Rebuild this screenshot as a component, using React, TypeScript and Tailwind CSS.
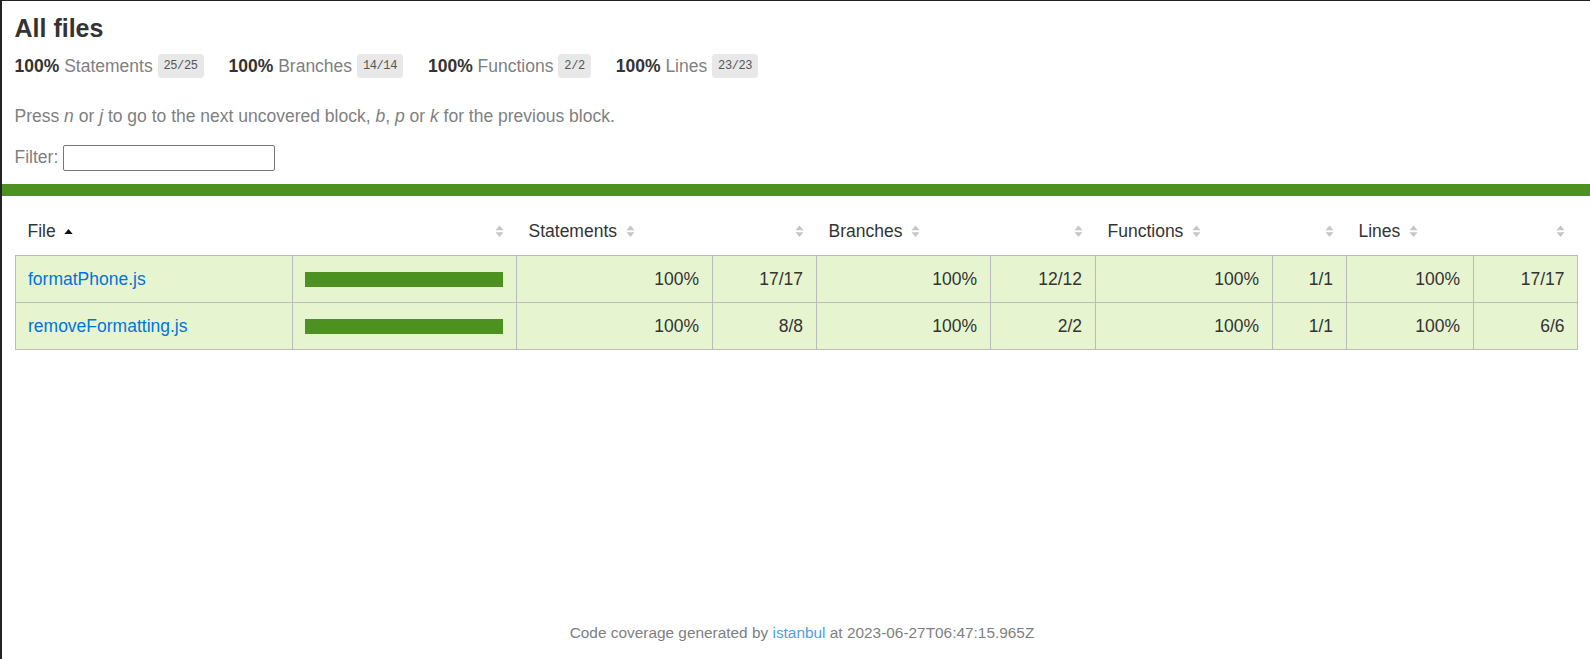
import React from "react";

const SortBoth = () => (
  <svg
    width="9"
    height="12.5"
    viewBox="0 0 7 10"
    className="inline-block ml-[8.75px] align-baseline"
  >
    <path d="M0.3 4.2 L3.5 0.4 L6.7 4.2 Z" fill="#c6c6c6" />
    <path d="M0.3 5.8 L3.5 9.6 L6.7 5.8 Z" fill="#c6c6c6" />
  </svg>
);

const SortAsc = () => (
  <svg
    width="9"
    height="12.5"
    viewBox="0 0 7 10"
    className="inline-block ml-[8.75px] align-baseline"
  >
    <path d="M0.2 7.2 L3.5 3.2 L6.8 7.2 Z" fill="#111" />
  </svg>
);

const stats = [
  { label: "Statements", frac: "25/25" },
  { label: "Branches", frac: "14/14" },
  { label: "Functions", frac: "2/2" },
  { label: "Lines", frac: "23/23" },
];

const rows = [
  {
    file: "formatPhone.js",
    s: "17/17",
    b: "12/12",
    f: "1/1",
    l: "17/17",
  },
  {
    file: "removeFormatting.js",
    s: "8/8",
    b: "2/2",
    f: "1/1",
    l: "6/6",
  },
];

const td =
  "border border-[#bbb] px-[12.5px] py-[12.5px] leading-[21px] text-right whitespace-nowrap";

export default function App() {
  return (
    <div
      className="min-h-screen flex flex-col border-t border-l-2 border-[#222] bg-white text-[#333] text-[17.5px]"
      style={{ fontFamily: '"Liberation Sans", Arial, Helvetica, sans-serif' }}
    >
      <div className="flex-1">
        <div className="px-[12.5px] pt-[13px] pb-[11px]">
          <h1 className="text-[25px] font-bold leading-[28px] m-0">All files</h1>
          <div className="flex pt-[12px] pb-[12px]">
            {stats.map((s) => (
              <div key={s.label} className="pr-[25px] h-[24px] flex items-center whitespace-pre">
                <span className="font-bold">100%</span>
                <span className="text-[#7f7f7f]">{" " + s.label + " "}</span>
                <span
                  className="inline-block bg-[#e8e8e8] text-[#555] text-[12px] leading-[14px] px-[6px] py-[5px] rounded-[3.75px] tracking-[-0.4px]"
                  style={{ fontFamily: '"Liberation Mono", Consolas, monospace' }}
                >
                  {s.frac}
                </span>
              </div>
            ))}
          </div>
          <p className="text-[#7f7f7f] leading-[20px] mt-[16px] mb-[16px]">
            Press <em>n</em> or <em>j</em> to go to the next uncovered block,{" "}
            <em>b</em>, <em>p</em> or <em>k</em> for the previous block.
          </p>
          <div className="h-[31px] flex items-center text-[#7f7f7f] whitespace-pre">
            <span>Filter: </span>
            <input
              type="search"
              className="w-[212px] h-[26px] border border-[#767676] rounded-[2px] bg-white outline-none"
            />
          </div>
        </div>
        <div className="h-[12px] bg-[#4d9221]" />
        <div className="pt-[12px] pl-[12.5px] pr-[12px]">
          <table className="w-full table-fixed border-collapse">
            <colgroup>
              <col className="w-[277px]" />
              <col className="w-[224px]" />
              <col className="w-[196px]" />
              <col className="w-[104px]" />
              <col className="w-[174px]" />
              <col className="w-[105px]" />
              <col className="w-[177px]" />
              <col className="w-[74px]" />
              <col className="w-[127px]" />
              <col />
            </colgroup>
            <thead>
              <tr className="h-[47.5px]">
                <th className="px-[12.5px] text-left font-normal whitespace-nowrap">
                  File
                  <SortAsc />
                </th>
                <th className="px-[12.5px] text-right font-normal">
                  <SortBoth />
                </th>
                <th className="px-[12.5px] text-left font-normal whitespace-nowrap">
                  Statements
                  <SortBoth />
                </th>
                <th className="px-[12.5px] text-right font-normal">
                  <SortBoth />
                </th>
                <th className="px-[12.5px] text-left font-normal whitespace-nowrap">
                  Branches
                  <SortBoth />
                </th>
                <th className="px-[12.5px] text-right font-normal">
                  <SortBoth />
                </th>
                <th className="px-[12.5px] text-left font-normal whitespace-nowrap">
                  Functions
                  <SortBoth />
                </th>
                <th className="px-[12.5px] text-right font-normal">
                  <SortBoth />
                </th>
                <th className="px-[12.5px] text-left font-normal whitespace-nowrap">
                  Lines
                  <SortBoth />
                </th>
                <th className="px-[12.5px] text-right font-normal">
                  <SortBoth />
                </th>
              </tr>
            </thead>
            <tbody>
              {rows.map((r) => (
                <tr key={r.file} className="bg-[#e6f5d0]">
                  <td className="border border-[#bbb] px-[12.5px] py-[12.5px] leading-[21px] text-left whitespace-nowrap">
                    <a href="#" className="text-[#0074d9]">
                      {r.file}
                    </a>
                  </td>
                  <td className="border border-[#bbb] px-[12.5px] py-[12.5px]">
                    <div className="h-[15px] w-full bg-[#4d9221]" />
                  </td>
                  <td className={td}>100%</td>
                  <td className={td}>{r.s}</td>
                  <td className={td}>100%</td>
                  <td className={td}>{r.b}</td>
                  <td className={td}>100%</td>
                  <td className={td}>{r.f}</td>
                  <td className={td}>100%</td>
                  <td className={td}>{r.l}</td>
                </tr>
              ))}
            </tbody>
          </table>
        </div>
      </div>
      <div className="text-center text-[15.4px] leading-[17px] pl-[12px] pb-[18px] text-[#7f7f7f]">
        Code coverage generated by{" "}
        <a href="#" className="text-[#4d9ee4]">
          istanbul
        </a>{" "}
        at 2023-06-27T06:47:15.965Z
      </div>
    </div>
  );
}
